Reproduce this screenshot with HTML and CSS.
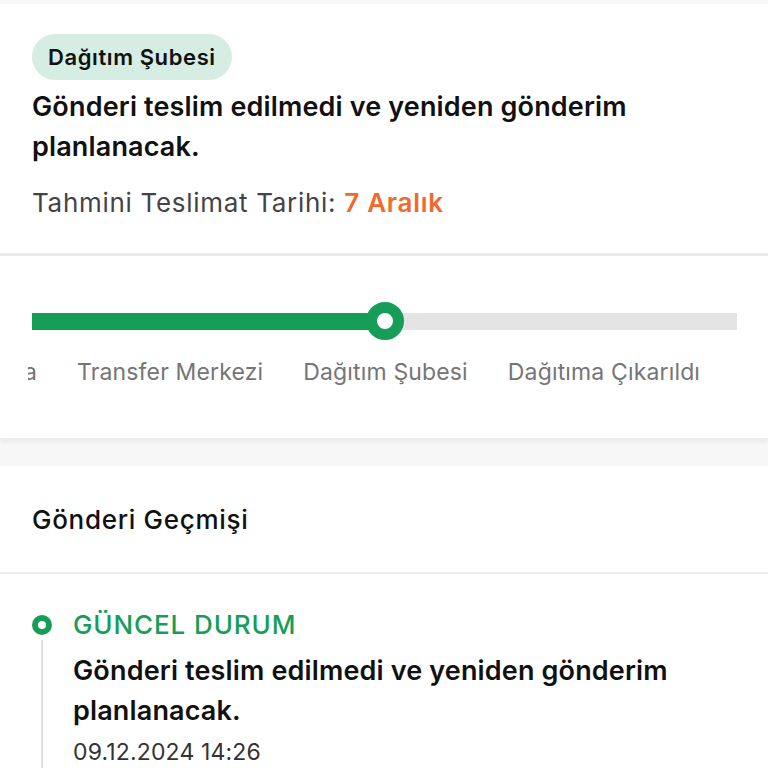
FILE: index.html
```
<!DOCTYPE html>
<html lang="tr">
<head>
<meta charset="utf-8">
<link rel="stylesheet" href="styles.css">
</head>
<body>
<div class="page">
  <section class="card summary">
    <span class="badge">Dağıtım Şubesi</span>
    <h1 class="title">Gönderi teslim edilmedi ve yeniden gönderim planlanacak.</h1>
    <p class="eta">Tahmini Teslimat Tarihi: <span class="eta-date">7 Aralık</span></p>
  </section>
  <section class="card progress-card">
    <div class="track">
      <div class="track-fill"></div>
      <div class="track-knob"></div>
    </div>
    <div class="steps">
      <div class="steps-row">
        <div class="step-cut"><span class="step">Şubede Kabul Edildi Yolda</span></div>
        <span class="step">Transfer Merkezi</span>
        <span class="step">Dağıtım Şubesi</span>
        <span class="step">Dağıtıma Çıkarıldı</span>
      </div>
    </div>
  </section>
  <section class="card history">
    <h2 class="history-head">Gönderi Geçmişi</h2>
    <div class="timeline">
      <div class="event">
        <div class="event-rail">
          <span class="event-dot"></span>
          <span class="event-line"></span>
        </div>
        <div class="event-body">
          <div class="event-status">GÜNCEL DURUM</div>
          <div class="event-text">Gönderi teslim edilmedi ve yeniden gönderim planlanacak.</div>
          <div class="event-date">09.12.2024 14:26</div>
        </div>
      </div>
    </div>
  </section>
</div>
</body>
</html>
```
FILE: styles.css
```
* { box-sizing: border-box; }
html, body { margin: 0; padding: 0; }
body {
  background: #f7f7f7;
  font-family: Inter, "Noto Sans", "Liberation Sans", sans-serif;
  color: #111;
  width: 768px;
  height: 768px;
  overflow: hidden;
}
.page { padding-top: 4px; display: flex; flex-direction: column; }
.card { background: #fff; }

.summary {
  padding: 30px 32px 34px;
  border-bottom: 3px solid #ececec;
}
.badge {
  display: inline-flex;
  align-items: center;
  height: 46px;
  padding: 0 16px;
  border-radius: 23px;
  background: #d5ede2;
  font-size: 22px;
  letter-spacing: 0.6px;
  font-weight: 600;
  color: #111;
}
.title {
  margin: 7px 0 0;
  font-size: 27px;
  letter-spacing: 0.15px;
  line-height: 40px;
  font-weight: 600;
  color: #111;
  width: 660px;
}
.eta {
  margin: 20px 0 0;
  font-size: 26px;
  letter-spacing: 0.7px;
  line-height: 32px;
  color: #444;
}
.eta-date { color: #ef6a2c; font-weight: 600; }

.progress-card {
  padding: 46px 0 51px;
  box-shadow: 0 3px 4px rgba(0,0,0,0.05);
  margin-bottom: 27px;
  border-bottom: 1px solid #eeeeee;
}
.track {
  position: relative;
  height: 38px;
  margin: 0 31px 0 32px;
  display: flex;
  align-items: center;
}
.track::before {
  content: "";
  flex: 1;
  height: 17px;
  background: #e4e4e5;
}
.track-fill {
  position: absolute;
  left: 0;
  top: 11px;
  width: 353px;
  height: 17px;
  background: #169d58;
}
.track-knob {
  position: absolute;
  left: 334px;
  top: 0;
  width: 38px;
  height: 38px;
  border-radius: 50%;
  border: 11px solid #169d58;
  background: #fff;
}
.steps {
  margin: 17px 32px 0 28px;
  overflow: hidden;
}
.steps-row {
  display: flex;
  gap: 40px;
  white-space: nowrap;
}
.step {
  font-size: 23px;
  letter-spacing: 0.15px;
  line-height: 30px;
  color: #757575;
  flex: none;
}
.step-cut {
  width: 9px;
  flex: none;
  display: flex;
  justify-content: flex-end;
}

.history-head {
  margin: 0;
  padding: 39px 32px 37px;
  font-size: 26px;
  letter-spacing: 0.7px;
  line-height: 30px;
  font-weight: 500;
  color: #111;
  border-bottom: 2px solid #ececec;
}
.timeline { padding: 36px 32px 0; }
.event { display: flex; gap: 21px; }
.event-rail {
  width: 20px;
  flex: none;
  display: flex;
  flex-direction: column;
  align-items: center;
  padding-top: 5px;
}
.event-dot {
  width: 20px;
  height: 20px;
  border-radius: 50%;
  border: 6px solid #169d58;
  background: #fff;
  flex: none;
}
.event-line {
  width: 2px;
  flex: 1;
  margin-top: 5px;
  background: #e0e0e0;
  min-height: 140px;
}
.event-status {
  font-size: 26px;
  letter-spacing: 0.9px;
  line-height: 30px;
  font-weight: 500;
  color: #169d58;
}
.event-text {
  margin-top: 11px;
  font-size: 27px;
  letter-spacing: 0.15px;
  line-height: 40px;
  font-weight: 600;
  color: #111;
  width: 660px;
}
.event-date {
  margin-top: 6px;
  font-size: 23px;
  letter-spacing: 0.15px;
  line-height: 30px;
  color: #333;
}
```
